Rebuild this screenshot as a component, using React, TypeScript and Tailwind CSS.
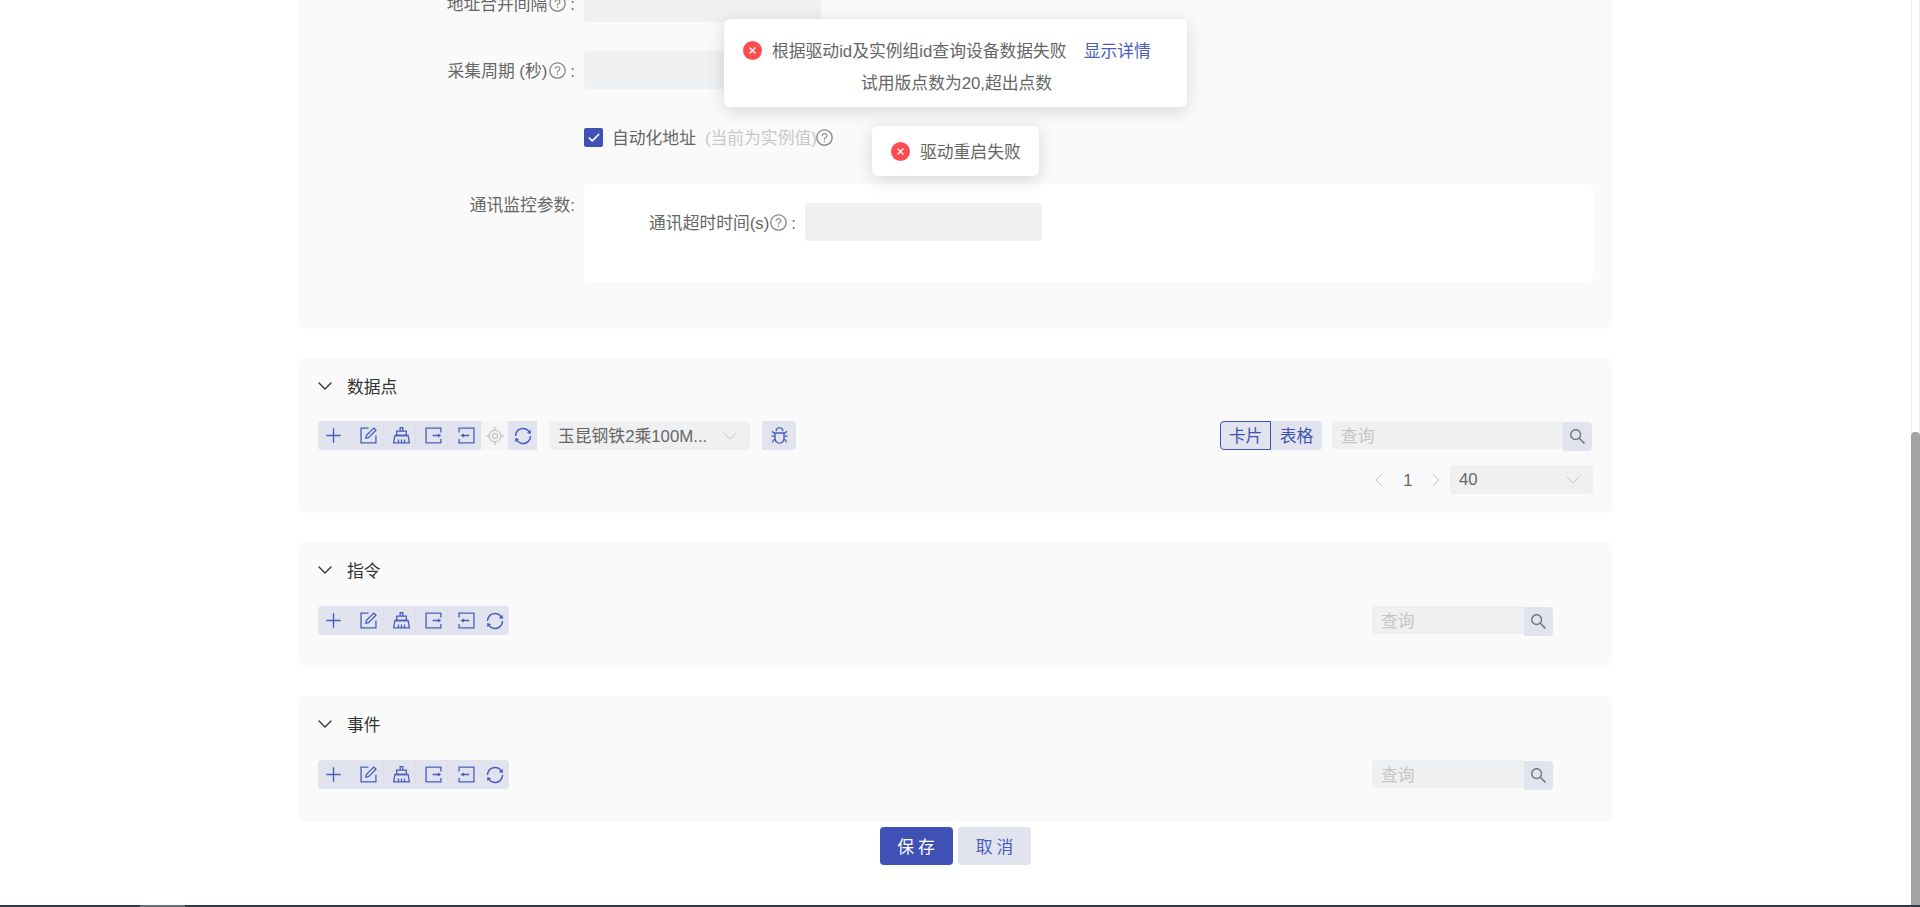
import React from 'react';
import { AiOutlineBug, AiOutlineQuestionCircle, AiOutlineSearch, AiOutlineSync } from 'react-icons/ai';
import { Check, ChevronDown, ChevronLeft, ChevronRight, LocateFixed, Plus } from 'lucide-react';

const EditIcon = () => (
  <svg viewBox="0 0 24 24" className="h-[21px] w-[21px]" fill="none" stroke="currentColor" strokeWidth="1.5">
    <path d="M12 3.5H3.5v17h17V12" />
    <path d="M18 3.5l2.5 2.5-8.5 8.5-3 .5.5-3z" />
  </svg>
);

const ClearIcon = () => (
  <svg viewBox="0 0 24 24" className="h-[21px] w-[21px]" fill="none" stroke="currentColor" strokeWidth="1.5">
    <path d="M10.5 7V3h3v4" />
    <path d="M6.5 7h11v5h-11z" />
    <path d="M4.5 12h15l1.5 8.5H3z" />
    <path d="M8.5 20.5V16.5M12 20.5V16.5M15.5 20.5V16.5" />
  </svg>
);

const ExportIcon = () => (
  <svg viewBox="0 0 24 24" className="h-[21px] w-[21px]" fill="none" stroke="currentColor" strokeWidth="1.5">
    <path d="M20.5 8.5V3.5H3.5v17h17V16" />
    <path d="M11 12h7" />
    <path d="M17 9.6l4 2.4-4 2.4z" fill="currentColor" stroke="none" />
  </svg>
);

const ImportIcon = () => (
  <svg viewBox="0 0 24 24" className="h-[21px] w-[21px]" fill="none" stroke="currentColor" strokeWidth="1.5">
    <path d="M3.5 8.5V3.5h17v17h-17V16" />
    <path d="M15 12H8" />
    <path d="M9 9.6L5 12l4 2.4z" fill="currentColor" stroke="none" />
  </svg>
);

const ErrorIcon = () => (
  <svg viewBox="0 0 19 19" className="h-[19px] w-[19px] shrink-0">
    <circle cx="9.5" cy="9.5" r="9.5" fill="#ff4d4f" />
    <path d="M6.5 6.5l6 6M12.5 6.5l-6 6" stroke="#fff" strokeWidth="1.3" />
  </svg>
);

const Help = () => <AiOutlineQuestionCircle className="h-[19px] w-[19px] shrink-0 text-[#8c8c8c]" />;

// text sits a little lower in its box than the fallback font puts it
const T = ({ className, children }: { className?: string; children: React.ReactNode }) => (
  <span className={`pt-[3px] ${className ?? ''}`}>{children}</span>
);

const GroupBtn = ({ w, last, children }: { w: string; last?: boolean; children: React.ReactNode }) => (
  <div className={`flex h-full items-center justify-center text-[#4a5cbd] ${w} ${last ? '' : 'border-r border-[#dcdfea]'}`}>
    {children}
  </div>
);

const Tools = () => (
  <>
    <GroupBtn w="w-[32px]"><Plus className="h-[23px] w-[23px]" strokeWidth={1.4} /></GroupBtn>
    <GroupBtn w="w-[34px] pl-[3px]"><EditIcon /></GroupBtn>
    <GroupBtn w="w-[32px] pl-[3px]"><ClearIcon /></GroupBtn>
    <GroupBtn w="w-[32px] pl-[3px]"><ExportIcon /></GroupBtn>
    <GroupBtn w="w-[33px] pl-[3px]" last><ImportIcon /></GroupBtn>
  </>
);

const Search = ({ w }: { w: string }) => (
  <div className="flex items-start">
    <div className={`flex h-[28px] items-center rounded-l bg-[#eff0f2] pl-[9px] text-[#c4c4c4] ${w}`}><T>查询</T></div>
    <div className="mt-px flex h-[29px] w-[29px] items-center justify-center rounded-r bg-[#e1e4ee] text-[#777]">
      <AiOutlineSearch className="h-[19px] w-[19px]" />
    </div>
  </div>
);

const Panel = ({ title, children, className }: { title: string; children: React.ReactNode; className: string }) => (
  <section className={`mt-[29px] rounded-md bg-[#fafafa] px-[19px] ${className}`}>
    <div className="flex h-[56px] items-center text-[#333]">
      <ChevronDown className="ml-[-5px] h-[24px] w-[24px] text-[#333]" strokeWidth={1.4} />
      <T className="ml-[10px]">{title}</T>
    </div>
    {children}
  </section>
);

const FieldLabel = ({ children }: { children: React.ReactNode }) => (
  <div className="flex items-center justify-end">
    {children}
    <T className="ml-[3px]">:</T>
  </div>
);

export default function App() {
  return (
    <div
      className="relative flex h-[907px] w-[1920px] flex-col overflow-hidden bg-white text-[16.8px] text-[#666]"
      style={{ fontFamily: '"Liberation Sans", "Noto Sans CJK SC", sans-serif' }}
    >
      <div className="flex min-h-0 flex-1">
        <main className="flex w-[1911px] flex-col">
          <div className="mx-auto w-[1313px]">
            <section className="h-[329px] rounded-b-md bg-[#fafafa]">
              <div className="flex h-[22px] overflow-hidden">
                <div className="flex w-[276px] items-end justify-end">
                  <div className="flex h-[38px] shrink-0 items-center">
                    <FieldLabel><T>地址合并间隔</T><span className="ml-px"><Help /></span></FieldLabel>
                  </div>
                </div>
                <div className="ml-[9px] w-[237px] rounded-b bg-[#eff0f2]" />
              </div>
              <div className="mt-[29px] flex h-[38px]">
                <div className="flex w-[276px] items-center justify-end">
                  <FieldLabel><T>采集周期 (秒)</T><span className="ml-px"><Help /></span></FieldLabel>
                </div>
                <div className="ml-[9px] w-[237px] rounded bg-[#eff0f2]" />
              </div>
              <div className="ml-[285px] mt-[39px] flex h-[19px] items-center">
                <div className="flex h-[19px] w-[19px] items-center justify-center rounded-[2px] bg-[#3f51b5]">
                  <Check className="h-[14px] w-[14px] text-white" strokeWidth={3} />
                </div>
                <T className="ml-[9px]">自动化地址</T>
                <T className="ml-[9px] text-[#c8c8c8]">(当前为实例值)</T>
                <span className="-ml-[2px]"><Help /></span>
              </div>
              <div className="mt-[37px] flex">
                <div className="flex h-[40px] w-[276px] items-center justify-end">
                  <T>通讯监控参数:</T>
                </div>
                <div className="ml-[9px] h-[98px] w-[1009px] rounded-md bg-white pt-[19px]">
                  <div className="flex h-[38px]">
                    <div className="flex w-[212px] items-center justify-end">
                      <FieldLabel><T>通讯超时时间(s)</T><Help /></FieldLabel>
                    </div>
                    <div className="ml-[9px] w-[237px] rounded bg-[#eff0f2]" />
                  </div>
                </div>
              </div>
            </section>

            <Panel title="数据点" className="h-[155px]">
              <div className="mt-[7px] flex items-start justify-between">
                <div className="flex items-start">
                  <div className="flex h-[29px] overflow-hidden rounded-l bg-[#e1e4ee]">
                    <Tools />
                  </div>
                  <div className="flex h-[29px] w-[27px] items-center justify-center bg-[#f5f5f5] text-[#c4c4c4]">
                    <LocateFixed className="h-[20px] w-[20px]" strokeWidth={1.5} />
                  </div>
                  <div className="flex h-[29px] w-[29px] items-center justify-center bg-[#e1e4ee] text-[#4a5cbd]">
                    <AiOutlineSync className="h-[20px] w-[20px]" />
                  </div>
                  <div className="ml-[12px] flex h-[29px] w-[201px] items-center justify-between rounded bg-[#eff0f2] pl-[9px] pr-[8px]">
                    <T>玉昆钢铁2乘100M...</T>
                    <ChevronDown className="h-[24px] w-[24px] text-[#c4c4c4]" strokeWidth={1} />
                  </div>
                  <div className="ml-[12px] flex h-[29px] w-[34px] items-center justify-center rounded-r bg-[#e1e4ee] text-[#4a5cbd]">
                    <AiOutlineBug className="h-[19px] w-[19px]" />
                  </div>
                </div>
                <div className="mr-px flex items-start">
                  <div className="flex h-[29px] items-center text-[#3f51b5]">
                    <div className="flex h-full w-[51px] items-center justify-center rounded-l border border-[#3f51b5] bg-[#e1e4ee]"><T>卡片</T></div>
                    <div className="flex h-full w-[51px] items-center justify-center rounded-r bg-[#e1e4ee]"><T>表格</T></div>
                  </div>
                  <div className="ml-[10px]">
                    <Search w="w-[231px]" />
                  </div>
                </div>
              </div>
              <div className="mt-[14px] flex h-[29px] items-center justify-end">
                <ChevronLeft className="h-[24px] w-[24px] text-[#c0c0c0]" strokeWidth={1} />
                <T className="ml-[12px] mr-[11px] w-[10px] text-center">1</T>
                <ChevronRight className="h-[24px] w-[24px] text-[#c0c0c0]" strokeWidth={1} />
                <div className="ml-[2px] flex h-full w-[143px] items-center justify-between rounded bg-[#eff0f2] pl-[9px] pr-[8px]">
                  <span>40</span>
                  <ChevronDown className="h-[24px] w-[24px] text-[#c4c4c4]" strokeWidth={1} />
                </div>
              </div>
            </Panel>

            {['指令', '事件'].map((title) => (
              <Panel key={title} title={title} className="h-[125.4px]">
                <div className="mt-[8px] flex items-start justify-between pr-[40px]">
                  <div className="flex h-[29px] overflow-hidden rounded bg-[#e1e4ee]">
                    <Tools />
                    <div className="flex h-full w-[28px] items-center justify-center text-[#4a5cbd]">
                      <AiOutlineSync className="h-[20px] w-[20px]" />
                    </div>
                  </div>
                  <Search w="w-[152px]" />
                </div>
              </Panel>
            ))}

            <div className="mt-[5px] flex justify-center gap-[5px] tracking-[4px]">
              <button className="flex h-[38px] w-[73px] items-center justify-center rounded bg-[#3f51b5] pl-[3px] text-white"><T>保存</T></button>
              <button className="flex h-[38px] w-[73px] items-center justify-center rounded bg-[#e1e4ee] pl-[4px] text-[#4a5cbd]"><T>取消</T></button>
            </div>
          </div>
        </main>
        <aside className="flex w-[9px] flex-col border-x border-[#efefef] bg-white">
          <div className="h-[432px] shrink-0" />
          <div className="-mx-px flex-1 rounded-t-[4px] bg-[#a3a3a3]" />
        </aside>
      </div>

      <div className="flex h-[2px] shrink-0 bg-[#2f3a42]">
        <div className="ml-[140px] h-full w-[45px] bg-[#6b6f75]" />
      </div>

      <div className="absolute left-[724px] top-[19px] h-[88px] w-[463px] rounded-md bg-white pl-[19px] pt-[19px] shadow-[0_4px_18px_rgba(0,0,0,0.14)]">
        <div className="flex h-[24px] items-center">
          <ErrorIcon />
          <T className="ml-[10px]">根据驱动id及实例组id查询设备数据失败</T>
          <T className="ml-[17px] text-[#4a5cbd]">显示详情</T>
        </div>
        <div className="mt-[10px] h-[24px] pl-[118px] leading-[24px]">试用版点数为20,超出点数</div>
      </div>

      <div className="absolute left-[872px] top-[126px] flex h-[50px] w-[167px] items-center rounded-md bg-white pl-[19px] shadow-[0_4px_18px_rgba(0,0,0,0.14)]">
        <ErrorIcon />
        <T className="ml-[10px]">驱动重启失败</T>
      </div>
    </div>
  );
}
